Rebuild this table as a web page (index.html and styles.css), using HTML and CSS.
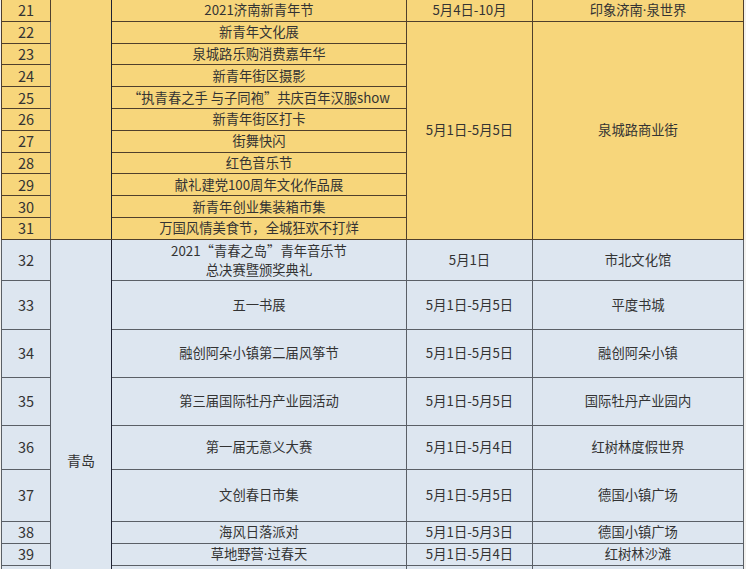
FILE: index.html
```html
<!DOCTYPE html>
<html lang="zh-CN">
<head>
<meta charset="utf-8">
<title>活动列表</title>
<link rel="stylesheet" href="styles.css">
</head>
<body>
<div class="frame">
<table class="events">
<colgroup><col class="c-no"><col class="c-city"><col class="c-name"><col class="c-date"><col class="c-place"></colgroup>
<tbody class="jinan">
<tr class="r-s"><td class="no">21</td><td class="city" rowspan="11"></td><td>2021济南新青年节</td><td>5月4日-10月</td><td>印象济南<span class="dot">·</span>泉世界</td></tr>
<tr class="r-s"><td class="no">22</td><td>新青年文化展</td><td rowspan="10">5月1日-5月5日</td><td rowspan="10">泉城路商业街</td></tr>
<tr class="r-s"><td class="no">23</td><td>泉城路乐购消费嘉年华</td></tr>
<tr class="r-s"><td class="no">24</td><td>新青年街区摄影</td></tr>
<tr class="r-s"><td class="no">25</td><td>“执青春之手 与子同袍”共庆百年汉服show</td></tr>
<tr class="r-s"><td class="no">26</td><td>新青年街区打卡</td></tr>
<tr class="r-s"><td class="no">27</td><td>街舞快闪</td></tr>
<tr class="r-s"><td class="no">28</td><td>红色音乐节</td></tr>
<tr class="r-s"><td class="no">29</td><td>献礼建党100周年文化作品展</td></tr>
<tr class="r-s"><td class="no">30</td><td>新青年创业集装箱市集</td></tr>
<tr class="r-s"><td class="no">31</td><td>万国风情美食节，全城狂欢不打烊</td></tr>
</tbody>
<tbody class="qingdao">
<tr class="r-41"><td class="no">32</td><td class="city" rowspan="9">青岛</td><td class="two">2021“青春之岛”青年音乐节<br>总决赛暨颁奖典礼</td><td>5月1日</td><td>市北文化馆</td></tr>
<tr class="r-49"><td class="no">33</td><td>五一书展</td><td>5月1日-5月5日</td><td>平度书城</td></tr>
<tr class="r-48"><td class="no">34</td><td>融创阿朵小镇第二届风筝节</td><td>5月1日-5月5日</td><td>融创阿朵小镇</td></tr>
<tr class="r-48"><td class="no">35</td><td>第三届国际牡丹产业园活动</td><td>5月1日-5月5日</td><td>国际牡丹产业园内</td></tr>
<tr class="r-44"><td class="no">36</td><td>第一届无意义大赛</td><td>5月1日-5月4日</td><td>红树林度假世界</td></tr>
<tr class="r-52"><td class="no">37</td><td>文创春日市集</td><td>5月1日-5月5日</td><td>德国小镇广场</td></tr>
<tr class="r-22"><td class="no">38</td><td>海风日落派对</td><td>5月1日-5月3日</td><td>德国小镇广场</td></tr>
<tr class="r-22"><td class="no">39</td><td>草地野营<span class="dot">·</span>过春天</td><td>5月1日-5月4日</td><td>红树林沙滩</td></tr>
<tr class="r-tail"><td class="no"></td><td></td><td></td><td></td></tr>
</tbody>
</table>
</div>
</body>
</html>
```
FILE: styles.css
```css
html, body {
  margin: 0;
  padding: 0;
  background: #f2f1ee;
}
.frame {
  width: 746px;
  height: 569px;
  overflow: hidden;
}
.events {
  margin: -1px 0 0 1px;
  width: 742px;
  table-layout: fixed;
  border-collapse: collapse;
  font-family: "Noto Sans CJK SC", "Noto Sans", sans-serif;
  font-size: 13.3px;
  color: #333333;
}
.c-no { width: 49px; }
.c-city { width: 61px; }
.c-name { width: 295px; }
.c-date { width: 126px; }
.c-place { width: 211px; }
.events td {
  border: 1px solid #4a4036;
  padding: 0;
  text-align: center;
  vertical-align: middle;
  line-height: 18px;
  white-space: nowrap;
}
.jinan td {
  background: #f7d67b;
  border-color: #4f3f2c;
}
.qingdao td {
  background: #dde6f0;
  border-color: #5a5f66;
}
.events td.no {
  font-size: 14.5px;
}
.events td.city {
  border-left-color: #555a62;
  border-right-color: #1f2233;
  font-size: 14px;
}
.events td.two {
  line-height: 19px;
}
.dot {
  font-family: "Noto Sans", "DejaVu Sans", sans-serif;
}
.r-s { height: 21.8px; }
.r-41 { height: 41px; }
.r-49 { height: 49px; }
.r-48 { height: 48px; }
.r-44 { height: 44px; }
.r-52 { height: 52px; }
.r-22 { height: 22px; }
.r-tail { height: 116px; }
```
